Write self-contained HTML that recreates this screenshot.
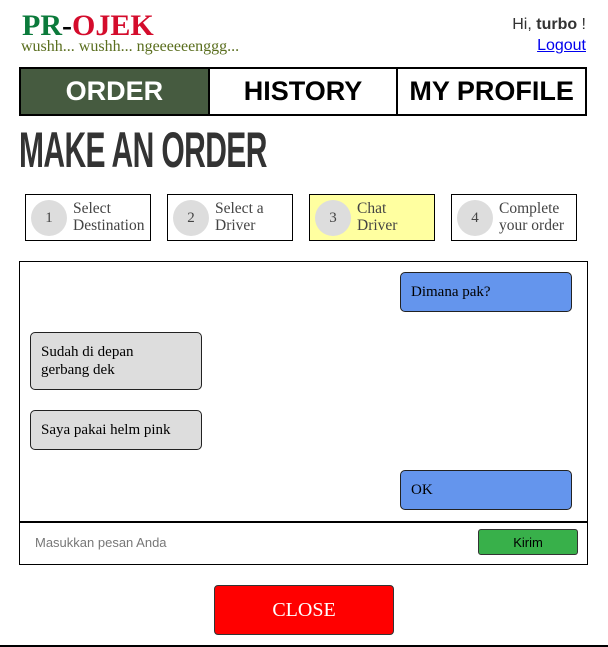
<!DOCTYPE html>
<html><head><meta charset="utf-8"><style>
*{margin:0;padding:0;box-sizing:border-box}
body{width:608px;height:647px;position:relative;background:#fff;overflow:hidden;font-family:"Liberation Serif",serif}
.a{position:absolute}
.logo{left:22px;top:9px;font-size:30px;font-weight:bold;line-height:34px}
.tag{left:21px;top:38px;font-size:16px;color:#5a6e1e;line-height:18px}
.hi{right:22px;top:16px;font-family:"Liberation Sans",sans-serif;font-size:16px;color:#333}
.lo{right:22px;top:37px;font-family:"Liberation Sans",sans-serif;font-size:16px;color:#00e;text-decoration:underline}
.nav{left:19px;top:67px;width:568px;height:49px;border:2px solid #000;display:flex}
.nav div{flex:1;display:flex;align-items:center;justify-content:center;font-family:"Liberation Sans",sans-serif;font-weight:bold;font-size:27px;border-left:2px solid #000}
.nav div:first-child{border-left:none;background:#465b40;color:#fff}
.title{left:19px;top:123px;font-family:"Liberation Sans",sans-serif;font-weight:bold;font-size:50px;color:#333;transform:scaleX(0.6);transform-origin:left top;letter-spacing:-1px;white-space:nowrap;line-height:54px}
.st{top:194px;width:126px;height:47px;border:1.5px solid #000;font-size:15.5px;line-height:17px;color:#444}
.st .c{position:absolute;left:5px;top:5px;width:36px;height:36px;border-radius:50%;background:#ddd;text-align:center;line-height:36px;font-size:15px}
.st .t{position:absolute;left:47px;top:5px;white-space:nowrap}
.chat{left:19px;top:261px;width:569px;height:304px;border:1.5px solid #000}
.b{border:1.2px solid #222;border-radius:5px;font-size:15px;line-height:18px;padding:0 10px;display:flex;align-items:center;width:172px}
.bl{background:#6495ed}.gr{background:#ddd}
</style></head><body>
<div class="a logo"><span style="color:#0b7a3b">PR</span>-<span style="color:#d40c2c">OJEK</span></div>
<div class="a tag">wushh... wushh... ngeeeeeenggg...</div>
<div class="a hi">Hi, <b>turbo</b> !</div>
<div class="a lo">Logout</div>
<div class="a nav"><div>ORDER</div><div>HISTORY</div><div>MY PROFILE</div></div>
<div class="a title">MAKE AN ORDER</div>
<div class="a st" style="left:25px"><div class="c">1</div><div class="t">Select<br>Destination</div></div>
<div class="a st" style="left:167px"><div class="c">2</div><div class="t">Select a<br>Driver</div></div>
<div class="a st" style="left:309px;background:#ffffa0"><div class="c">3</div><div class="t">Chat<br>Driver</div></div>
<div class="a st" style="left:451px"><div class="c">4</div><div class="t">Complete<br>your order</div></div>
<div class="a chat"></div>
<div class="a b bl" style="left:400px;top:272px;height:40px">Dimana pak?</div>
<div class="a b gr" style="left:30px;top:332px;height:58px">Sudah di depan<br>gerbang dek</div>
<div class="a b gr" style="left:30px;top:410px;height:40px">Saya pakai helm pink</div>
<div class="a b bl" style="left:400px;top:470px;height:40px">OK</div>
<div class="a" style="left:19px;top:521px;width:569px;height:2px;background:#000"></div>
<div class="a" style="left:35px;top:535px;font-family:'Liberation Sans',sans-serif;font-size:13px;color:#777">Masukkan pesan Anda</div>
<div class="a" style="left:478px;top:529px;width:100px;height:26px;background:#38b04a;border:1px solid #333;border-radius:3px;font-family:'Liberation Sans',sans-serif;font-size:13px;display:flex;align-items:center;justify-content:center">Kirim</div>
<div class="a" style="left:214px;top:585px;width:180px;height:50px;background:#f00;border:1px solid #333;border-radius:4px;color:#fff;font-size:20px;display:flex;align-items:center;justify-content:center">CLOSE</div>
<div class="a" style="left:0;top:645px;width:608px;height:1.5px;background:#000"></div>
</body></html>
